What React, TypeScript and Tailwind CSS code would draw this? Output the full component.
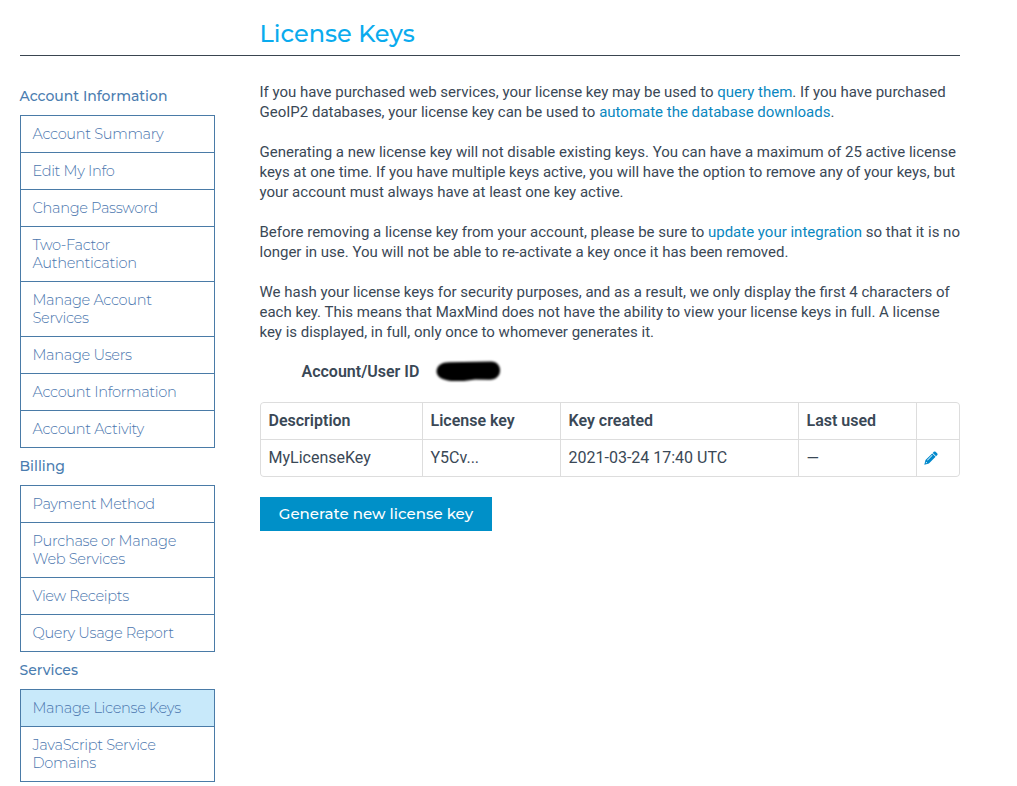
const headingFont = "font-[Montserrat,Inter,sans-serif]";

type Item = { lines: string[]; active?: boolean };
type Section = { title: string; items: Item[] };

const sections: Section[] = [
  {
    title: "Account Information",
    items: [
      { lines: ["Account Summary"] },
      { lines: ["Edit My Info"] },
      { lines: ["Change Password"] },
      { lines: ["Two-Factor", "Authentication"] },
      { lines: ["Manage Account", "Services"] },
      { lines: ["Manage Users"] },
      { lines: ["Account Information"] },
      { lines: ["Account Activity"] },
    ],
  },
  {
    title: "Billing",
    items: [
      { lines: ["Payment Method"] },
      { lines: ["Purchase or Manage", "Web Services"] },
      { lines: ["View Receipts"] },
      { lines: ["Query Usage Report"] },
    ],
  },
  {
    title: "Services",
    items: [
      { lines: ["Manage License Keys"], active: true },
      { lines: ["JavaScript Service", "Domains"] },
    ],
  },
];

function Sidebar() {
  return (
    <nav className={`w-[195px] shrink-0 pt-[22px] text-[#4b7db0] ${headingFont}`}>
      {sections.map((s) => (
        <section key={s.title}>
          <h2 className="-ml-[0.5px] h-[37px] pt-[9px] text-sm leading-[18px] font-medium">{s.title}</h2>
          <ul className="divide-y divide-[#4a7ba7] border border-[#4a7ba7]">
            {s.items.map((item) => (
              <li
                key={item.lines[0]}
                className={`px-[11.5px] py-[9px] text-[14.6px] leading-[18px] font-light tracking-[-0.33px] text-[#4b76ae] ${item.active ? "bg-[#c8e9fa]" : ""}`}
              >
                {item.lines.map((l) => (
                  <a key={l} className="block whitespace-nowrap">
                    {l}
                  </a>
                ))}
              </li>
            ))}
          </ul>
        </section>
      ))}
    </nav>
  );
}

function Paragraph({ children }: { children: React.ReactNode }) {
  return <p className="mb-5 -ml-[0.5px] text-[15px] leading-5 whitespace-nowrap">{children}</p>;
}

function TextLink({ children }: { children: React.ReactNode }) {
  return <a className="text-[#0a87c0]">{children}</a>;
}

function PencilIcon() {
  return (
    <svg className="size-[14px]" viewBox="0 0 14 14" fill="#0088cc">
      <path d="M9.8.8Q10.7 0 11.6.8L13.3 2.4Q14 3.2 13.3 4L12.1 5.2L8.7 1.9Z" />
      <path d="M8.2 2.4L11.6 5.8L4.9 12.5L.3 13.7L1.5 9.1ZM8 4.1L3 9.1L3.5 9.6L8.5 4.6ZM2.1 10.8L1.7 12.3L3.2 11.9Z" fillRule="evenodd" />
    </svg>
  );
}

function KeyTable() {
  const row = "grid grid-cols-[161px_137px_237px_117px_42px] gap-px h-9 leading-9 text-base";
  const cell = "bg-white pl-[7.5px]";
  return (
    <div className="overflow-hidden rounded border border-[#dddddd] bg-[#dddddd]">
      <div className={`${row} font-semibold`}>
        <div className={cell}>Description</div>
        <div className={cell}>License key</div>
        <div className={cell}>Key created</div>
        <div className={cell}>Last used</div>
        <div className={cell} />
      </div>
      <div className={`${row} mt-px`}>
        <div className={cell}>MyLicenseKey</div>
        <div className={cell}>Y5Cv...</div>
        <div className={cell}>2021-03-24 17:40 UTC</div>
        <div className="bg-white pt-px pl-[7.5px]">—</div>
        <div className="flex items-center bg-white pb-px pl-[7px]">
          <PencilIcon />
        </div>
      </div>
    </div>
  );
}

export default function App() {
  return (
    <div className="h-[786px] w-[1017px] overflow-hidden bg-white pl-5 font-[Roboto,sans-serif] text-[#3a4856]">
      <header className="h-14 w-[940px] border-b border-[#3a4550] pt-[19px] pl-[239.5px]">
        <h1 className={`text-2xl leading-[30px] font-medium text-[#0aabee] ${headingFont}`}>License Keys</h1>
      </header>
      <div className="flex w-[940px] gap-[45px]">
        <Sidebar />
        <main className="w-[700px] pt-[26px]">
          <Paragraph>
            If you have purchased web services, your license key may be used to <TextLink>query them</TextLink>. If you have purchased<br />
            GeoIP2 databases, your license key can be used to <TextLink>automate the database downloads</TextLink>.
          </Paragraph>
          <Paragraph>
            Generating a new license key will not disable existing keys. You can have a maximum of 25 active license<br />
            keys at one time. If you have multiple keys active, you will have the option to remove any of your keys, but<br />
            your account must always have at least one key active.
          </Paragraph>
          <Paragraph>
            Before removing a license key from your account, please be sure to <TextLink>update your integration</TextLink> so that it is no<br />
            longer in use. You will not be able to re-activate a key once it has been removed.
          </Paragraph>
          <Paragraph>
            We hash your license keys for security purposes, and as a result, we only display the first 4 characters of<br />
            each key. This means that MaxMind does not have the ability to view your license keys in full. A license<br />
            key is displayed, in full, only once to whomever generates it.
          </Paragraph>
          <div className="flex h-10 items-start pl-[41.5px] text-base leading-5">
            <span className="w-[132px] shrink-0 font-semibold">Account/User ID</span>
            <svg className="-mt-[3px] h-6 w-[70px]" viewBox="0 0 70 24">
              <defs>
                <filter id="soft" x="-10%" y="-20%" width="120%" height="140%">
                  <feGaussianBlur stdDeviation="1.1" />
                </filter>
              </defs>
              <path
                d="M2.5 12.5C3 6 8 3.2 15 3.2L57 2.6C63 2.8 66 6.5 66 11.5C66 17 62 20.5 56 20.7L41 20.5L30 22L17 22C8 21 3 18 2.5 12.5Z"
                fill="#000"
                filter="url(#soft)"
              />
            </svg>
          </div>
          <KeyTable />
          <button className={`mt-5 h-[34px] w-[232px] bg-[#0090c8] text-[15px] font-medium tracking-[0.02px] whitespace-nowrap text-white ${headingFont}`}>
            Generate new license key
          </button>
        </main>
      </div>
    </div>
  );
}
